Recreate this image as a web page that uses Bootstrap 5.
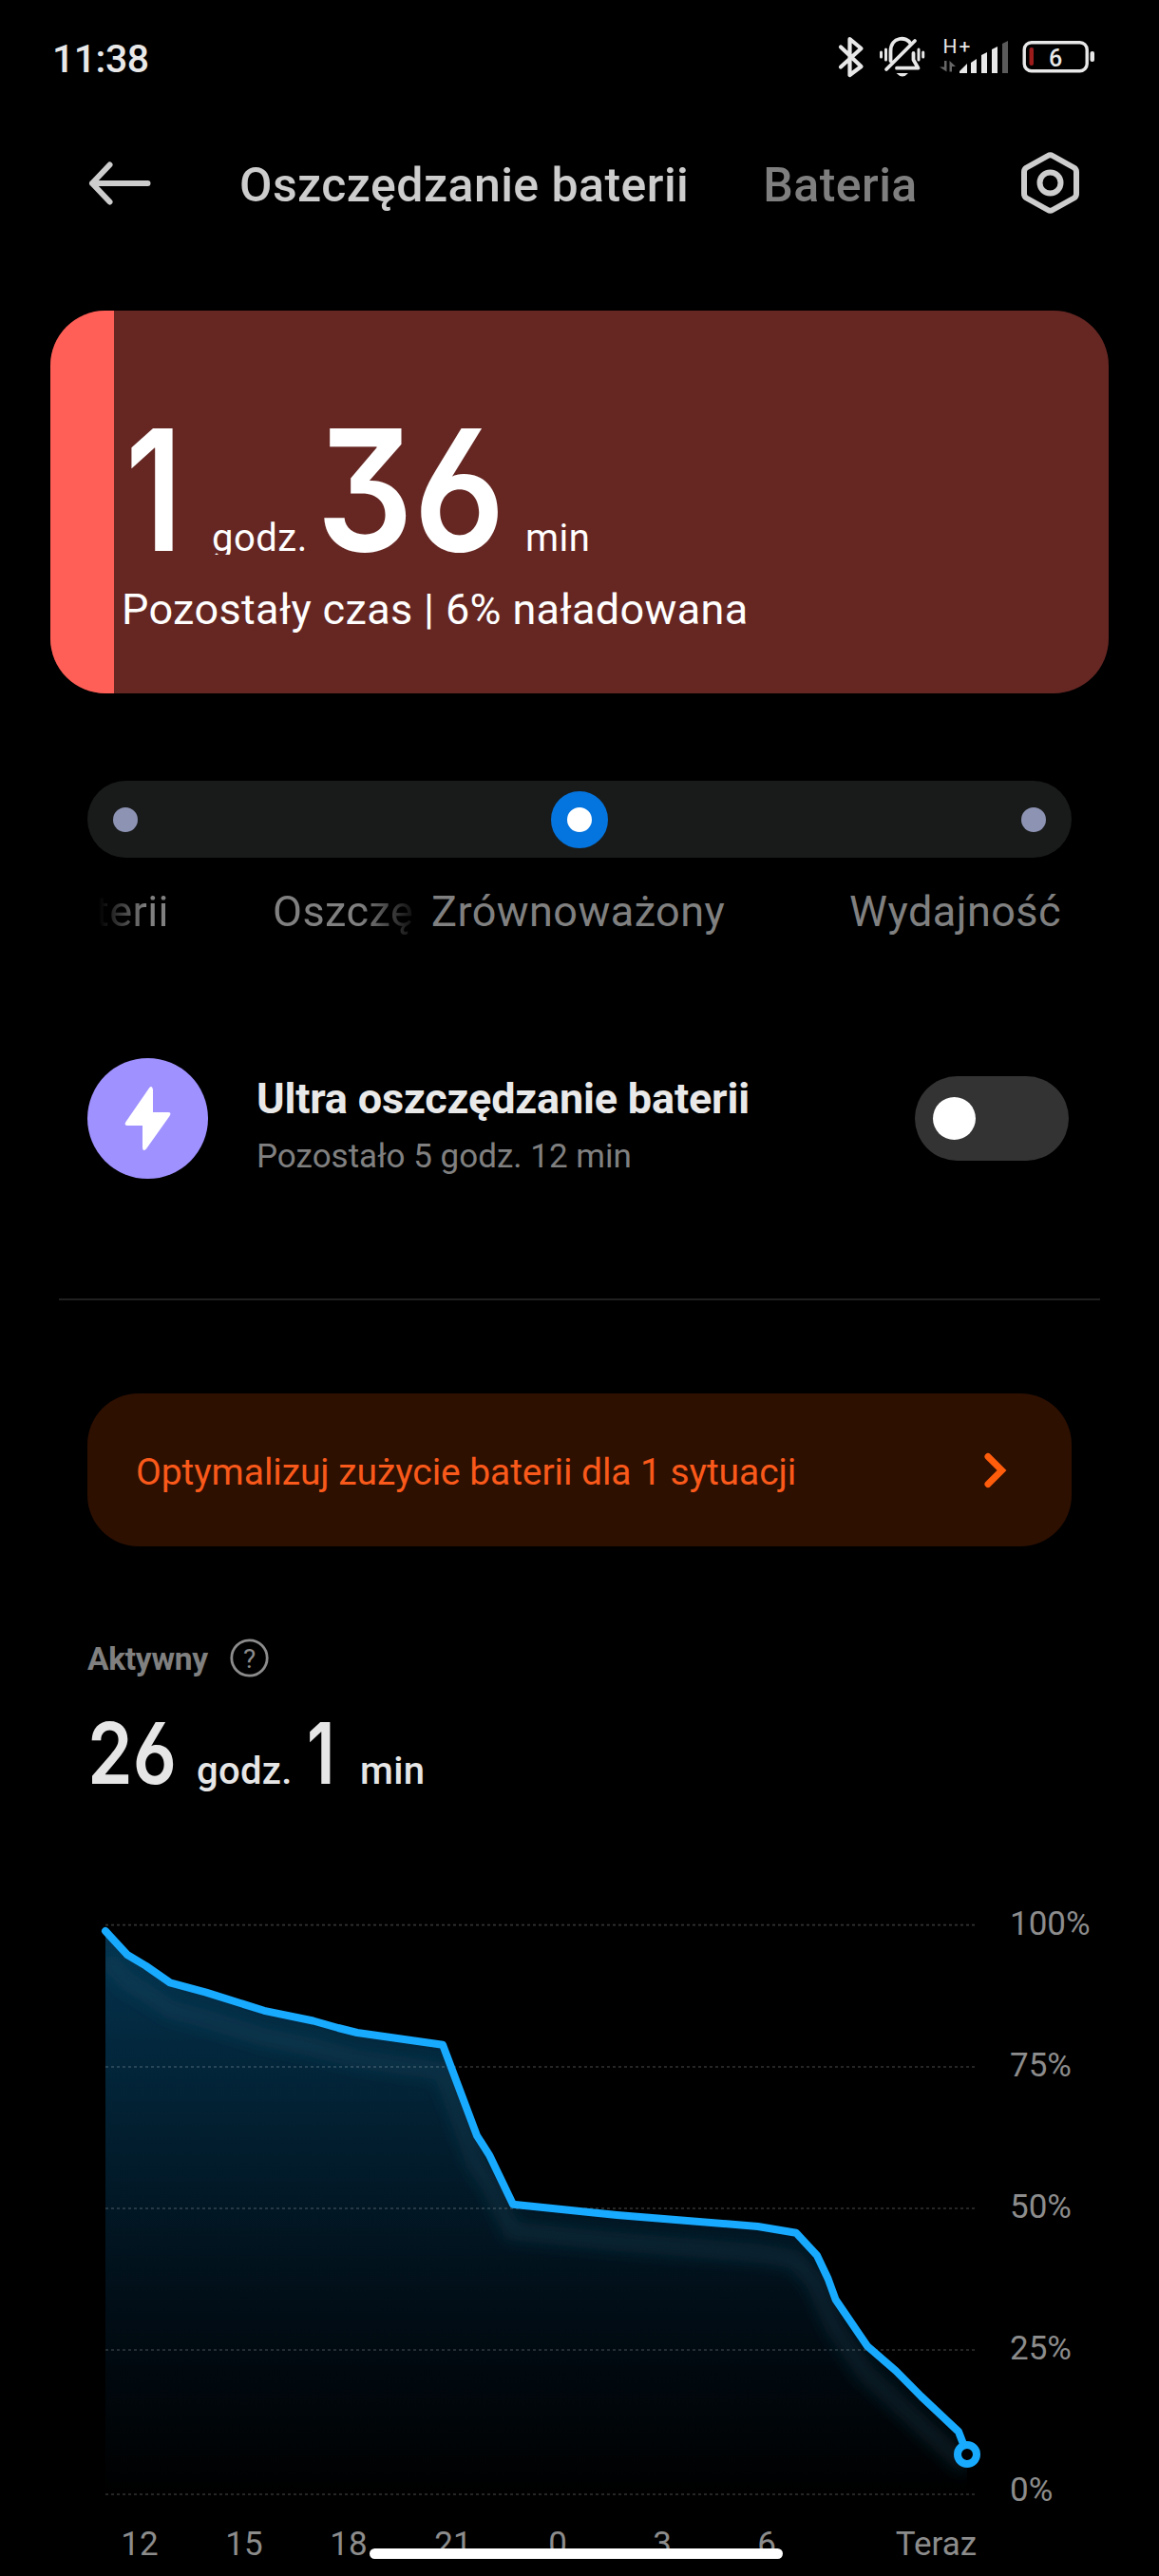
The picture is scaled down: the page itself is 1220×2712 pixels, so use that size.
<!DOCTYPE html>
<html lang="pl" data-bs-theme="dark">
<head>
<meta charset="utf-8">
<meta name="viewport" content="width=device-width, initial-scale=1">
<title>Oszczędzanie baterii</title>
<link href="https://cdn.jsdelivr.net/npm/bootstrap@5.3.0/dist/css/bootstrap.min.css" rel="stylesheet">
<style>
  body { background: #000; font-family: Roboto, "Noto Sans", sans-serif; width: 1220px; height: 2712px; overflow: hidden; margin: 0; }
  svg { display: block; flex: none; overflow: visible; }
  .status-bar { height: 120px; padding: 0 66px 0 55px; }
  .status-icons { gap: 10px; }
  .clock { font-size: 41px; line-height: 48px; font-weight: 500; letter-spacing: -.5px; color: #e8e8e8; padding-top: 3px; }
  .top-nav { height: 145px; padding: 0 84px 0 93px; margin-bottom: 62px; }
  .top-nav a { font-size: 50px; line-height: 60px; font-weight: 500; letter-spacing: .45px; color: #7f7f7f; text-decoration: none; padding: 5px 0 0; }
  .top-nav a.active { color: #cdcdcd; margin-left: 92px; }
  .top-nav a + a { margin-left: 78px; }
  .hero { height: 403px; margin: 0 53px; border-radius: 58px; background: #662723; overflow: hidden; color: #fff; }
  .hero-fill { width: 67px; background: #ff5f57; }
  .hero-body { padding: 103px 0 0 8px; }
  .hero-time { height: 154px; overflow: hidden; font-size: 40px; line-height: 173px; letter-spacing: .5px; }
  .digits { font-family: Inter, Roboto, sans-serif; font-feature-settings: "cv03", "cv09"; display: inline-block; flex: none; white-space: nowrap; transform-origin: 0 50%; letter-spacing: 0; }
  .hero-time .digits { font-size: 177px; font-weight: 600; transform: scaleX(.905); }
  .hero-h { width: 91px; margin-left: 4px; } .hero-m { width: 220px; }
  .hero-time .hero-h .digits { transform: scaleX(.8); }
  .hero-time .unit-h { width: 110px; }
  .hero-note { font-size: 45px; line-height: 54px; margin-top: 31px; white-space: nowrap; letter-spacing: .35px; }
  .track { height: 81px; margin: 92px 92px 0; padding: 0 27px; border-radius: 41px; background: #191b1a; }
  .stop { width: 26px; height: 26px; border-radius: 50%; background: #8d93b3; }
  .stop-on { width: 60px; height: 60px; border-radius: 50%; background: #fff; border: 17px solid #0474de; }
  .mode-labels { height: 60px; margin-top: 27px; padding: 0 103px 0 100px; font-size: 45px; line-height: 60px; letter-spacing: .45px; color: #808080; white-space: nowrap; }
  .marquee-box { width: 336px; margin-right: 18px; -webkit-mask-image: linear-gradient(90deg, transparent 4px, #000 54px, #000 280px, transparent 342px); mask-image: linear-gradient(90deg, transparent 4px, #000 54px, #000 280px, transparent 342px); }
  .run-tail { width: 75px; text-align: right; margin-right: 112px; }
  .ultra { height: 127px; margin: 124px 95px 0 92px; }
  .ultra-text { margin-left: 51px; padding-top: 16px; }
  .ultra-title { font-size: 45px; line-height: 54px; font-weight: 700; letter-spacing: -.17px; color: #e9e9e9; }
  .ultra-sub { font-size: 35px; line-height: 42px; color: #808080; margin-top: 13px; }
  .toggle { width: 162px; height: 89px; border-radius: 45px; background: #333; padding-left: 19px; margin-top: 19px; }
  .knob { width: 45px; height: 45px; border-radius: 50%; background: #fff; }
  .rule { height: 2px; background: #202020; margin: 126px 62px 0; }
  .tip { height: 161px; margin: 98px 92px 0; padding: 0 66px 0 51px; border-radius: 54px; background: #2e1001; color: #f9591a; font-size: 39px; letter-spacing: -.08px; }
  .tip span { padding-top: 5px; }
  .active-head { height: 41px; margin: 97px 92px 0; font-size: 33.5px; font-weight: 700; letter-spacing: -.3px; color: #808080; }
  .active-head span { line-height: 41px; width: 150px; padding-top: 2px; }
  .active-time { height: 110px; margin: 34px 92px 70px 92px; font-size: 40px; line-height: 92px; font-weight: 500; letter-spacing: .3px; color: #e6e6e6; }
  .active-time .digits { font-size: 89px; font-weight: 600; transform: scaleX(.86); }
  .act-h { width: 115px; } .act-u { width: 116px; } .act-m { width: 56px; }
  .active-time .act-m .digits { transform: scaleX(.78); }
  .axis { font: 35px Roboto, sans-serif; fill: #8c8c8c; }
  .home-bar { left: 389px; top: 2683px; width: 435px; height: 11px; border-radius: 6px; background: #fff; }
</style>
<script src="https://cdn.jsdelivr.net/npm/bootstrap@5.3.0/dist/js/bootstrap.bundle.min.js"></script>
</head>
<body class="position-relative">

<header class="status-bar d-flex align-items-center">
  <div class="clock me-auto">11:38</div>
  <div class="status-icons d-flex">
    <svg width="32" height="48" viewBox="880 36 32 48" fill="none" stroke="#e8e8e8" stroke-width="4.2" stroke-linejoin="round" stroke-linecap="round"><path d="M885 49.500L906.500 70L894.500 79V41L906.500 51L885 70.500"/></svg>
    <svg width="54" height="48" viewBox="922 36 54 48" fill="none" stroke="#e8e8e8" stroke-width="3.800" stroke-linecap="round" stroke-linejoin="round">
      <path d="M937.500 64V54C937.500 38 955 38 958.500 46M961.500 56V63L966.500 71.700H944M933 73L963 43"/>
      <path d="M927.500 55V60M932.500 52V63M967 52V63M971.700 55V60" stroke-width="3"/>
      <path d="M943.500 77H956Q950 84 943.500 77Z" fill="#e8e8e8" stroke="none"/>
    </svg>
    <svg width="78" height="48" viewBox="986 36 78 48">
      <text x="992.500" y="56" font-family="Roboto" font-size="21" fill="#e8e8e8" textLength="29">H+</text>
      <path d="M994 64h2.500v11.500L989 70.500h5zM999.500 75.500h2.500V70h4L999.500 64z" fill="#666"/>
      <g fill="#e8e8e8"><path d="M1010 77v-2l8-8v10z"/><path d="M1022 77v-11l6-4v15z"/><path d="M1033 77V58l6-3v22z"/><path d="M1044 77V52l6-3v28z"/></g>
      <path d="M1055 77V46l6-3v34z" fill="#5a5a5a"/>
    </svg>
    <svg width="80" height="48" viewBox="1074 36 80 48">
      <rect x="1078.200" y="44.700" width="66" height="30" rx="7.500" fill="none" stroke="#e8e8e8" stroke-width="3.400"/>
      <rect x="1147.500" y="54" width="4.500" height="11" rx="2" fill="#e8e8e8"/>
      <rect x="1083.500" y="50" width="4.500" height="19" rx="2" fill="#9c1c1c"/>
      <text x="1111" y="69.500" text-anchor="middle" font-family="Roboto" font-size="25" font-weight="500" fill="#e8e8e8">6</text>
    </svg>
  </div>
</header>

<nav class="top-nav d-flex align-items-center">
  <svg width="67" height="46" viewBox="93 169.500 67 46" fill="none" stroke="#cdcdcd" stroke-width="6" stroke-linecap="round" stroke-linejoin="round"><path d="M155.500 192.500H97M115.500 173L97 192.500L115.500 212"/></svg>
  <a href="#" class="active">Oszczędzanie baterii</a>
  <a href="#">Bateria</a>
  <svg class="ms-auto" width="61" height="65" viewBox="1075 160 61 65" fill="none" stroke="#cdcdcd" stroke-width="6" stroke-linejoin="round"><path d="M1103 164Q1105.500 162.500 1108 164L1130.500 176.500Q1133 178 1133 181V204Q1133 207 1130.500 208.500L1108 221Q1105.500 222.500 1103 221L1080.500 208.500Q1078 207 1078 204V181Q1078 178 1080.500 176.500Z"/><circle cx="1105.500" cy="192.500" r="11"/></svg>
</nav>

<section class="hero d-flex">
  <div class="hero-fill"></div>
  <div class="hero-body">
    <div class="hero-time d-flex align-items-baseline">
      <span class="hero-h"><span class="digits">1</span></span><span class="unit-h">godz.</span><span class="hero-m"><span class="digits">36</span></span><span>min</span>
    </div>
    <div class="hero-note">Pozostały czas | 6% naładowana</div>
  </div>
</section>

<div class="track d-flex align-items-center justify-content-between">
  <div class="stop"></div><div class="stop-on"></div><div class="stop"></div>
</div>
<div class="mode-labels d-flex">
  <div class="marquee-box d-flex"><span class="run-tail">terii</span><span>Oszczę</span></div>
  <div>Zrównoważony</div>
  <div class="ms-auto">Wydajność</div>
</div>

<section class="ultra d-flex">
  <svg width="127" height="127" viewBox="92 1114 127 127"><circle cx="155.500" cy="1177.500" r="63.500" fill="#9f91ff"/><path d="M157 1145.500L132.500 1181Q130 1185 134.500 1185H150V1208.500Q150.500 1213 154 1209.500L178.500 1175Q181 1171 177 1171H161V1147Q160 1142 157 1145.500Z" fill="#fff"/></svg>
  <div class="ultra-text me-auto">
    <div class="ultra-title">Ultra oszczędzanie baterii</div>
    <div class="ultra-sub">Pozostało 5 godz. 12 min</div>
  </div>
  <div class="toggle d-flex align-items-center"><div class="knob"></div></div>
</section>

<div class="rule"></div>

<section class="tip d-flex align-items-center justify-content-between">
  <span>Optymalizuj zużycie baterii dla 1 sytuacji</span>
  <svg width="28" height="40" viewBox="1034 1527.500 28 40" fill="none" stroke="#ff5c0c" stroke-width="7" stroke-linecap="round" stroke-linejoin="miter"><path d="M1040 1533L1054.500 1547.500L1040 1562"/></svg>
</section>

<div class="active-head d-flex align-items-center">
  <span>Aktywny</span>
  <svg width="41" height="41" viewBox="0 0 41 41"><circle cx="20.500" cy="20.500" r="18.700" fill="none" stroke="#8c8c8c" stroke-width="2.800"/><text x="20.500" y="30.500" text-anchor="middle" font-family="Roboto" font-weight="400" font-size="28" fill="#8c8c8c">?</text></svg>
</div>
<div class="active-time d-flex align-items-baseline">
  <span class="act-h"><span class="digits">26</span></span><span class="act-u">godz.</span><span class="act-m"><span class="digits">1</span></span><span>min</span>
</div>

<svg width="1220" height="732" viewBox="0 1980 1220 732">
  <defs>
    <linearGradient id="areaFill" gradientUnits="userSpaceOnUse" x1="0" y1="2033" x2="0" y2="2626"><stop offset="0" stop-color="#043450"/><stop offset=".35" stop-color="#021f30"/><stop offset=".7" stop-color="#010c14"/><stop offset="1" stop-color="#000"/></linearGradient>
    <clipPath id="areaClip"><path d="M111 2033L134 2058L153.500 2069.600L179 2087.400L217 2097.600L278 2116.800L329.600 2127.500L356 2135L376 2140L466 2152.700L502 2248.400L515.400 2269.400L540 2320.800L649.400 2332L797.700 2344L838 2350.700L860 2374.500L871.600 2399L879.600 2421L913 2470L943 2496L969.700 2523L1009 2560L1018 2584V2626H111Z"/></clipPath>
    <filter id="soft" filterUnits="userSpaceOnUse" x="60" y="1980" width="1010" height="732"><feGaussianBlur stdDeviation="8"/></filter>
  </defs>
  <g clip-path="url(#areaClip)">
    <rect x="111" y="2026" width="908" height="600" fill="url(#areaFill)"/>
    <path d="M111 2061L134 2086L153.500 2097.600L179 2115.400L217 2125.600L278 2144.800L329.600 2155.500L376 2168L466 2180.700L500 2276.400L514 2297.400L539 2348.800L649.400 2360L797.700 2372L836 2378.700L858 2402.500L877.600 2449L911 2498L967.700 2551L1018 2598" fill="none" stroke="#1a526c" stroke-opacity=".27" stroke-width="20" filter="url(#soft)"/>
  </g>
  <path d="M111 2026.700H1028M111 2176H1028M111 2325H1028M111 2474H1028M111 2626H1028" stroke="#fff" stroke-opacity=".2" stroke-width="1.700" stroke-dasharray="3 3"/>
  <path d="M111 2033L134 2058L153.500 2069.600L179 2087.400L217 2097.600L278 2116.800L329.600 2127.500L356 2135L376 2140L466 2152.700L502 2248.400L515.400 2269.400L540 2320.800L649.400 2332L797.700 2344L838 2350.700L860 2374.500L871.600 2399L879.600 2421L913 2470L943 2496L969.700 2523L1009 2560L1014 2573" fill="none" stroke="#18aaff" stroke-width="8" stroke-linecap="round" stroke-linejoin="round"/>
  <circle cx="1018" cy="2584" r="10" fill="#000" stroke="#18aaff" stroke-width="8"/>
  <g class="axis">
    <text x="1063" y="2037">100%</text><text x="1063" y="2186">75%</text><text x="1063" y="2335">50%</text><text x="1063" y="2484">25%</text><text x="1063" y="2633">0%</text>
  </g>
  <g class="axis" text-anchor="middle">
    <text x="147" y="2690">12</text><text x="257" y="2690">15</text><text x="367" y="2690">18</text><text x="477" y="2690">21</text><text x="587" y="2690">0</text><text x="697" y="2690">3</text><text x="807" y="2690">6</text><text x="985.500" y="2690">Teraz</text>
  </g>
</svg>
<div class="home-bar position-absolute"></div>
</body>
</html>
